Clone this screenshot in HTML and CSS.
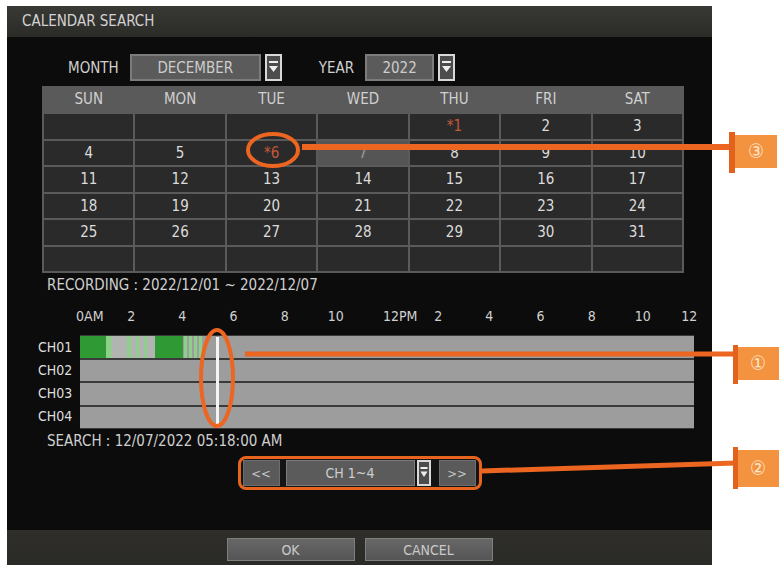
FILE: index.html
```html
<!doctype html>
<html lang="en">
<head>
  <meta charset="utf-8">
  <title>Calendar Search</title>
  <link rel="stylesheet" href="styles.css">
</head>
<body>
  <div class="page">
    <div class="dialog">
      <div class="dialog-title">CALENDAR SEARCH</div>

      <div class="dialog-body">
        <div class="picker">
          <span class="picker-label">MONTH</span>
          <div class="select select-month">DECEMBER</div>
          <span class="drop">
            <svg width="17" height="27" viewBox="0 0 17 27"><rect x="1" y="1" width="15" height="25" fill="#4c4c4c" stroke="#d8d8d8" stroke-width="2"/><rect x="4" y="7" width="9" height="2" fill="#eee"/><polygon points="4,12 13,12 8.5,18" fill="#eee"/></svg>
          </span>
          <span class="picker-label picker-year">YEAR</span>
          <div class="select select-year">2022</div>
          <span class="drop">
            <svg width="17" height="27" viewBox="0 0 17 27"><rect x="1" y="1" width="15" height="25" fill="#4c4c4c" stroke="#d8d8d8" stroke-width="2"/><rect x="4" y="7" width="9" height="2" fill="#eee"/><polygon points="4,12 13,12 8.5,18" fill="#eee"/></svg>
          </span>
        </div>

        <div class="cal">
          <div class="cal-head">SUN</div>
          <div class="cal-head">MON</div>
          <div class="cal-head">TUE</div>
          <div class="cal-head">WED</div>
          <div class="cal-head">THU</div>
          <div class="cal-head">FRI</div>
          <div class="cal-head">SAT</div>

          <div class="cal-day"></div>
          <div class="cal-day"></div>
          <div class="cal-day"></div>
          <div class="cal-day"></div>
          <div class="cal-day rec">*1</div>
          <div class="cal-day">2</div>
          <div class="cal-day">3</div>

          <div class="cal-day">4</div>
          <div class="cal-day">5</div>
          <div class="cal-day rec">*6</div>
          <div class="cal-day selected">7</div>
          <div class="cal-day">8</div>
          <div class="cal-day">9</div>
          <div class="cal-day">10</div>

          <div class="cal-day">11</div>
          <div class="cal-day">12</div>
          <div class="cal-day">13</div>
          <div class="cal-day">14</div>
          <div class="cal-day">15</div>
          <div class="cal-day">16</div>
          <div class="cal-day">17</div>

          <div class="cal-day">18</div>
          <div class="cal-day">19</div>
          <div class="cal-day">20</div>
          <div class="cal-day">21</div>
          <div class="cal-day">22</div>
          <div class="cal-day">23</div>
          <div class="cal-day">24</div>

          <div class="cal-day">25</div>
          <div class="cal-day">26</div>
          <div class="cal-day">27</div>
          <div class="cal-day">28</div>
          <div class="cal-day">29</div>
          <div class="cal-day">30</div>
          <div class="cal-day">31</div>

          <div class="cal-day"></div>
          <div class="cal-day"></div>
          <div class="cal-day"></div>
          <div class="cal-day"></div>
          <div class="cal-day"></div>
          <div class="cal-day"></div>
          <div class="cal-day"></div>
        </div>

        <p class="info">RECORDING : 2022/12/01 ~ 2022/12/07</p>

        <div class="timeline">
          <div class="ruler">
            <span class="tick tick-sfx" style="left:0%">0AM</span>
            <span class="tick" style="left:8.333%">2</span>
            <span class="tick" style="left:16.667%">4</span>
            <span class="tick" style="left:25%">6</span>
            <span class="tick" style="left:33.333%">8</span>
            <span class="tick" style="left:41.667%">10</span>
            <span class="tick tick-sfx" style="left:50%">12PM</span>
            <span class="tick" style="left:58.333%">2</span>
            <span class="tick" style="left:66.667%">4</span>
            <span class="tick" style="left:75%">6</span>
            <span class="tick" style="left:83.333%">8</span>
            <span class="tick" style="left:91.667%">10</span>
            <span class="tick tick-end" style="left:100%">12</span>
          </div>

          <div class="tracks">
            <div class="ch-names">
              <span>CH01</span>
              <span>CH02</span>
              <span>CH03</span>
              <span>CH04</span>
            </div>
            <div class="ch-bars">
              <div class="ch-bar">
                <i class="seg seg-rec" style="left:0%;width:4.23%"></i>
                <i class="seg seg-line" style="left:4.23%;width:0.98%"></i>
                <i class="seg seg-pale" style="left:5.21%;width:2.44%"></i>
                <i class="seg seg-line" style="left:7.65%;width:0.65%"></i>
                <i class="seg seg-pale" style="left:8.31%;width:0.81%"></i>
                <i class="seg seg-line" style="left:9.12%;width:0.49%"></i>
                <i class="seg seg-pale" style="left:9.61%;width:0.81%"></i>
                <i class="seg seg-line" style="left:10.42%;width:0.49%"></i>
                <i class="seg seg-pale" style="left:10.91%;width:1.3%"></i>
                <i class="seg seg-rec" style="left:12.21%;width:4.56%"></i>
                <i class="seg seg-line" style="left:16.94%;width:0.55%"></i>
                <i class="seg seg-line" style="left:17.75%;width:0.49%"></i>
                <i class="seg seg-line" style="left:18.57%;width:0.49%"></i>
                <i class="seg seg-line" style="left:19.38%;width:0.55%"></i>
              </div>
              <div class="ch-bar"></div>
              <div class="ch-bar"></div>
              <div class="ch-bar"></div>
              <div class="cursor" style="left:22.1%"></div>
            </div>
          </div>
        </div>

        <p class="info">SEARCH : 12/07/2022 05:18:00 AM</p>

        <div class="nav">
          <div class="nav-pill">
            <button class="nav-btn">&lt;&lt;</button>
            <div class="select select-ch">CH 1~4</div>
            <span class="drop drop-small">
              <svg width="14" height="26" viewBox="0 0 14 26"><rect x="1" y="1" width="12" height="24" fill="#4c4c4c" stroke="#d8d8d8" stroke-width="2"/><rect x="3.5" y="7" width="7" height="2" fill="#eee"/><polygon points="3.5,11.5 10.5,11.5 7,17" fill="#eee"/></svg>
            </span>
            <button class="nav-btn">&gt;&gt;</button>
          </div>
        </div>
      </div>

      <div class="dialog-foot">
        <button class="foot-btn">OK</button>
        <button class="foot-btn">CANCEL</button>
      </div>
    </div>

    <!-- manual callouts laid over the screenshot -->
    <svg class="callouts" width="784" height="568" viewBox="0 0 784 568">
      <g fill="none" stroke="#ec6521" stroke-width="4">
        <ellipse cx="273" cy="150" rx="25" ry="16"/>
        <ellipse cx="217" cy="378" rx="16" ry="48"/>
      </g>
      <g stroke="#ec6521" stroke-width="6">
        <line x1="302" y1="147" x2="732" y2="147"/>
      </g>
      <g stroke="#ec6521" stroke-width="5">
        <line x1="245" y1="354" x2="736" y2="354"/>
        <line x1="482" y1="471" x2="736" y2="463"/>
      </g>
      <g class="flag">
        <rect x="729" y="132" width="6" height="41" fill="#e2621d"/>
        <rect x="735" y="135" width="42" height="33" fill="#f3923f"/>
        <text x="756" y="158">③</text>
      </g>
      <g class="flag">
        <rect x="733" y="345" width="5" height="39" fill="#e2621d"/>
        <rect x="738" y="347" width="41" height="33" fill="#f3923f"/>
        <text x="758" y="370">①</text>
      </g>
      <g class="flag">
        <rect x="733" y="447" width="5" height="42" fill="#e2621d"/>
        <rect x="738" y="450" width="41" height="37" fill="#f3923f"/>
        <text x="758" y="475">②</text>
      </g>
    </svg>
  </div>
</body>
</html>
```

FILE: styles.css
```css
body {
  margin: 0;
  padding: 0;
  background: #ffffff;
  font-family: "DejaVu Sans Condensed", "DejaVu Sans", sans-serif;
  font-stretch: condensed;
  color: #cfcfcf;
}

.page {
  position: relative;
  width: 784px;
  height: 568px;
  overflow: hidden;
}

.dialog {
  width: 705px;
  margin: 6px 0 0 7px;
  background: #0c0c0c;
  display: flex;
  flex-direction: column;
}

.dialog-title {
  height: 31px;
  line-height: 31px;
  padding-left: 15px;
  background: linear-gradient(#393935, #2a2a27);
  font-size: 15px;
  color: #d2d2d2;
}

.dialog-body {
  height: 493px;
}

.picker {
  display: flex;
  align-items: center;
  height: 27px;
  margin: 17px 0 0 61px;
  font-size: 15px;
}

.picker-label {
  color: #d0d0d0;
}

.picker-year {
  margin-left: 37px;
}

.select {
  box-sizing: border-box;
  height: 27px;
  border: 2px solid #7c7c7c;
  background: #5b5b5b;
  display: flex;
  align-items: center;
  justify-content: center;
  color: #cdcdcd;
  font-size: 15px;
}

.select-month {
  width: 131px;
  margin-left: 11px;
}

.select-year {
  width: 69px;
  margin-left: 11px;
}

.drop {
  display: flex;
  margin-left: 4px;
}

/* calendar grid */
.cal {
  box-sizing: border-box;
  width: 642px;
  margin: 5px 0 0 35px;
  padding: 0 2px 2px;
  display: grid;
  grid-template-columns: repeat(7, 1fr);
  grid-template-rows: 26px repeat(6, 24.5px);
  gap: 2px;
  background: #5a5a5a;
  font-size: 15px;
}

.cal-head {
  display: flex;
  align-items: center;
  justify-content: center;
  color: #d0d0d0;
}

.cal-day {
  display: flex;
  align-items: center;
  justify-content: center;
  background: #2a2a2a;
  color: #dcdcdc;
}

.cal-day.rec {
  color: #c4583a;
}

.cal-day.selected {
  background: #555555;
  color: #9a9a9a;
}

.info {
  margin: 3px 0 0 40px;
  height: 18px;
  line-height: 18px;
  font-size: 15px;
  color: #d0d0d0;
}

/* timeline */
.timeline {
  margin: 13px 0 0 31px;
}

.ruler {
  position: relative;
  height: 18px;
  width: 614px;
  margin-left: 42px;
  font-size: 14px;
  line-height: 18px;
  color: #d0d0d0;
}

.tick {
  position: absolute;
  top: 0;
  transform: translateX(-50%);
  white-space: nowrap;
}

.tick-sfx {
  transform: translateX(-4px);
}

.tick-end {
  transform: translateX(-80%);
}

.tracks {
  display: flex;
  margin-top: 10px;
}

.ch-names {
  width: 42px;
  display: flex;
  flex-direction: column;
  padding-top: 1px;
  font-size: 14px;
  color: #dedede;
}

.ch-names span {
  height: 23px;
  line-height: 23px;
}

.ch-bars {
  position: relative;
  width: 614px;
  display: flex;
  flex-direction: column;
  gap: 2px;
  padding: 1px 0;
  background: #3a3a3a;
}

.ch-bar {
  position: relative;
  height: 21.5px;
  background: #9d9d9d;
}

.seg {
  position: absolute;
  top: 0;
  bottom: 0;
}

.seg-rec {
  background: #2f9a33;
}

.seg-line {
  background: #8fcf8c;
}

.seg-pale {
  background: #b1b4b1;
}

.cursor {
  position: absolute;
  top: 2px;
  bottom: 1px;
  width: 3px;
  background: #f4f4f4;
}

/* channel navigation */
.nav {
  display: flex;
  justify-content: center;
  margin-top: 6px;
}

.nav-pill {
  display: flex;
  align-items: center;
  height: 34px;
  box-sizing: border-box;
  padding: 0 3px 0 2px;
  border: 3px solid #e8651f;
  border-radius: 8px;
  background: #141414;
}

.nav-btn {
  width: 37px;
  height: 26px;
  border: 1px solid #6e6e6e;
  background: #5a5a5a;
  color: #c6c6c6;
  font-family: inherit;
  font-size: 13px;
  padding: 0;
}

.nav-btn:last-child {
  margin-left: 8px;
}

.select-ch {
  width: 129px;
  height: 26px;
  margin-left: 6px;
  border-width: 1px;
  font-size: 14px;
}

.drop-small {
  margin-left: 2px;
}

/* footer */
.dialog-foot {
  height: 35px;
  box-sizing: border-box;
  padding-top: 8px;
  display: flex;
  justify-content: center;
  gap: 10px;
  background: linear-gradient(#2f2e2b, #2a2a27);
}

.foot-btn {
  width: 128px;
  height: 23px;
  padding: 0;
  border: 1px solid #7e7e7e;
  background: linear-gradient(#676767, #555555);
  color: #cacaca;
  font-family: inherit;
  font-size: 14px;
}

/* callouts */
.callouts {
  position: absolute;
  top: 0;
  left: 0;
  pointer-events: none;
}

.flag text {
  fill: #fde6cc;
  font-family: "DejaVu Sans", sans-serif;
  font-size: 20px;
  text-anchor: middle;
}
```
